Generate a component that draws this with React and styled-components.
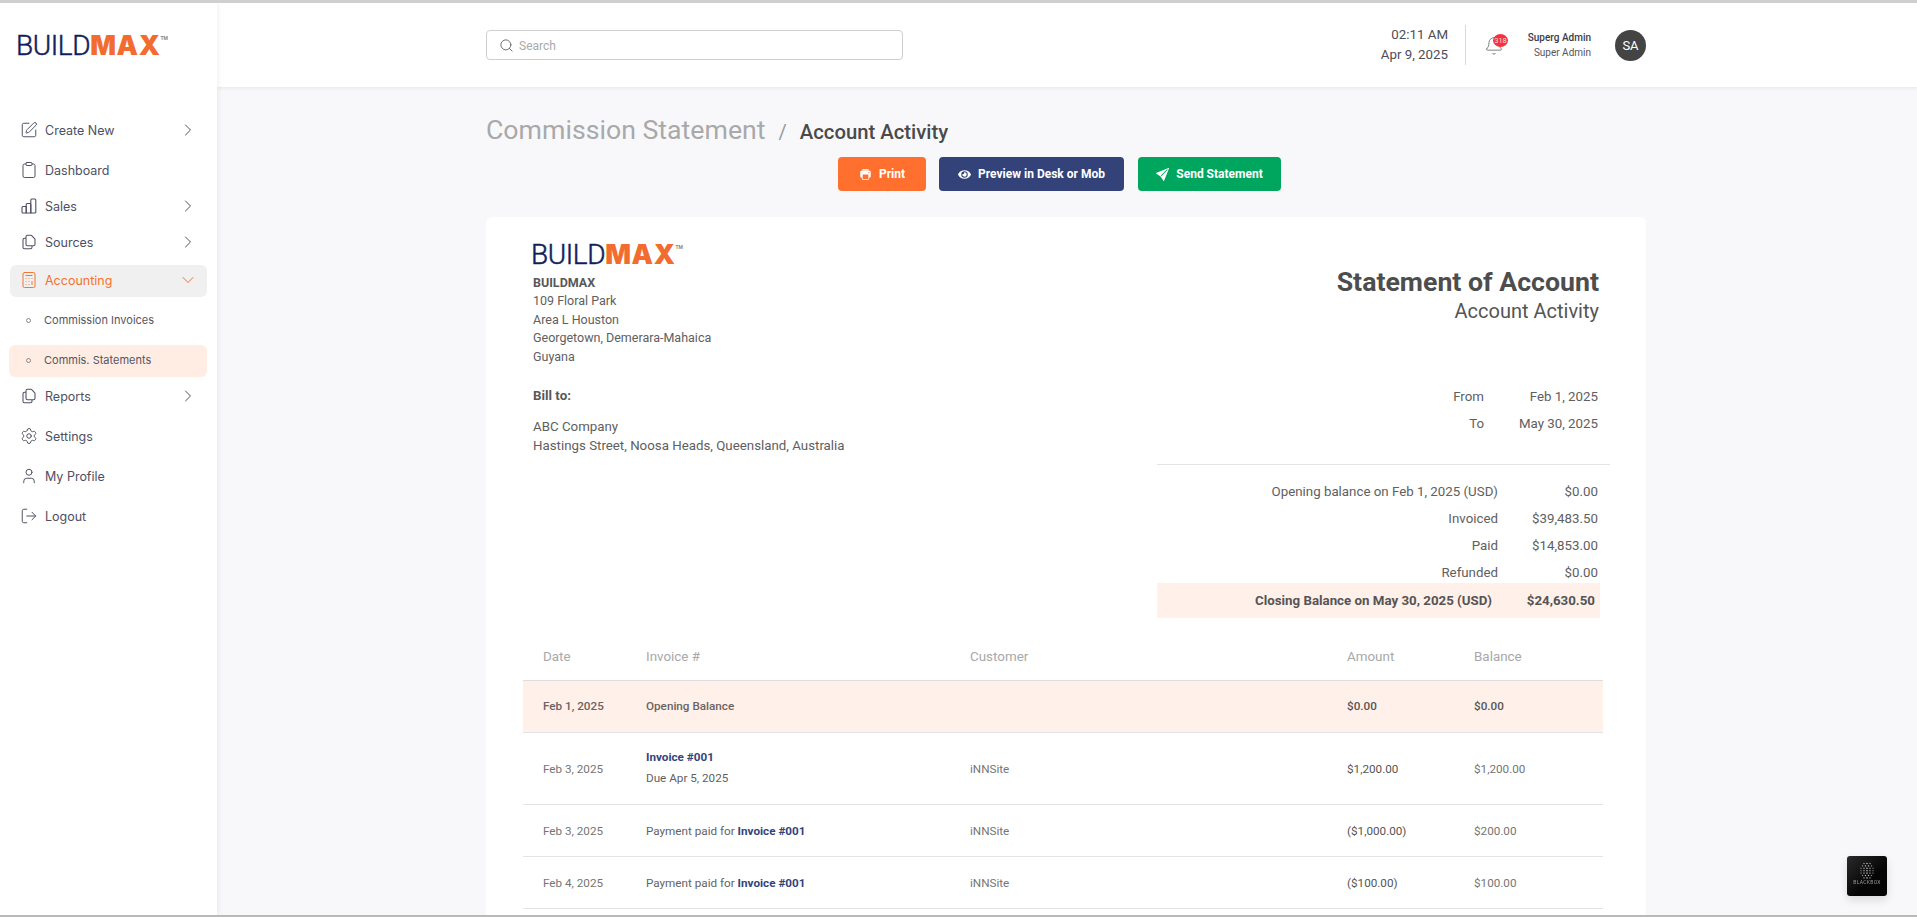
import React from "react";
import styled, { createGlobalStyle } from "styled-components";
import {
  SquarePen,
  Clipboard,
  Calculator,
  Settings,
  User,
  LogOut,
  ChevronRight,
  ChevronDown,
  Search,
  Bell,
} from "lucide-react";
import { BsSendFill } from "react-icons/bs";
import { FaEye } from "react-icons/fa";
import { IoPrint } from "react-icons/io5";
import { HiOutlineDocumentDuplicate } from "react-icons/hi";

const GlobalStyle = createGlobalStyle`
  html, body { margin: 0; padding: 0; height: 100%; overflow: hidden; }
  body { font-family: Roboto, "Liberation Sans", sans-serif; background: #f8f8fb; color: #555; }
  * { box-sizing: border-box; }
`;

const Shell = styled.div`
  display: flex;
  height: 917px;
  overflow: hidden;
  border-top: 3px solid #cfcfcf;
  border-bottom: 2px solid #b9b9b9;
  background: #f8f8fb;
`;

const Sidebar = styled.aside`
  width: 217px;
  flex-shrink: 0;
  background: #fff;
  box-shadow: 1px 0 5px rgba(0, 0, 0, 0.07);
  position: relative;
  z-index: 2;
`;

const SideLogo = styled.div`
  height: 108px;
  padding: 30px 0 0 18px;
`;

const LogoWrap = styled.div`
  display: flex;
  align-items: flex-start;
  height: 26px;
  margin-left: -2px;
  line-height: 26px;
  white-space: nowrap;
`;

const LogoBuild = styled.span`
  font-family: Roboto, sans-serif;
  font-weight: 300;
  font-size: 28px;
  letter-spacing: -0.4px;
  color: #101f5c;
  -webkit-text-stroke: 0.5px #101f5c;
`;

const LogoMax = styled.span`
  font-family: Inter, sans-serif;
  font-weight: 900;
  font-size: 27px;
  letter-spacing: 0.6px;
  color: #f26c30;
`;

const LogoTm = styled.span`
  font-size: 5px;
  line-height: 10px;
  color: #888;
  font-weight: 700;
`;

const Logo = () => (
  <LogoWrap>
    <LogoBuild>BUILD</LogoBuild>
    <LogoMax>MAX</LogoMax>
    <LogoTm>TM</LogoTm>
  </LogoWrap>
);

const NavItem = styled.div`
  display: flex;
  align-items: center;
  height: ${(p) => p.$h || 40}px;
  margin: ${(p) => (p.$active ? "2px" : "0")} 10px 0;
  padding: 0 9px 2px 12px;
  border-radius: 6px;
  font-family: Inter, sans-serif;
  font-size: 12.5px;
  color: ${(p) => (p.$active ? "#f4722f" : "#4f4f62")};
  background: ${(p) => (p.$active ? "#f0f0f0" : "transparent")};
  svg.lead {
    width: 18px;
    height: 18px;
    margin-right: 7px;
    margin-left: -2px;
    flex-shrink: 0;
  }
`;

const NavLabel = styled.span`
  flex: 1;
`;

const SubItem = styled.div`
  display: flex;
  align-items: center;
  height: ${(p) => p.$h || 32}px;
  margin: 0 10px 0 9px;
  padding: 0 0 2px 17px;
  border-radius: 6px;
  font-family: Inter, sans-serif;
  font-size: 11px;
  color: #55555f;
  background: ${(p) => (p.$active ? "#ffece3" : "transparent")};
`;

const SubDot = styled.span`
  width: 5px;
  height: 5px;
  border-radius: 50%;
  border: 1px solid #8a8a8a;
  margin-right: 13px;
  flex-shrink: 0;
`;

const Main = styled.main`
  flex: 1;
  min-width: 0;
`;

const Topbar = styled.header`
  height: 84px;
  background: #fff;
  box-shadow: 0 1px 4px rgba(0, 0, 0, 0.08);
  display: flex;
  align-items: center;
  padding-left: 269px;
`;

const SearchBox = styled.div`
  width: 417px;
  height: 30px;
  border: 1px solid #cfcfcf;
  border-radius: 4px;
  display: flex;
  align-items: center;
  padding: 1px 0 0 12px;
  font-size: 12px;
  color: #aaa;
  gap: 5px;
`;

const TimeBlock = styled.div`
  margin-left: 415px;
  width: 130px;
  text-align: right;
  font-size: 13.3px;
  line-height: 20px;
  color: #4d4d57;
`;

const Divider = styled.div`
  width: 1px;
  height: 40px;
  background: #d8d8d8;
  margin: 0 18px 0 17px;
`;

const BellWrap = styled.div`
  position: relative;
  width: 20px;
  height: 22px;
  margin-top: 4px;
  color: #666;
`;

const Badge = styled.span`
  position: absolute;
  top: -2px;
  left: 9px;
  width: 15px;
  height: 13px;
  border-radius: 50%;
  background: #f1343f;
  color: #ffd9dc;
  font-size: 7.5px;
  line-height: 13px;
  text-align: center;
`;

const UserInfo = styled.div`
  margin-left: 1px;
  width: 86px;
  text-align: right;
  font-size: 10px;
  line-height: 15px;
  color: #55555f;
`;

const UserName = styled.div`
  color: #3c3c46;
  font-weight: 500;
`;

const Avatar = styled.div`
  width: 31px;
  height: 31px;
  border-radius: 50%;
  margin-left: 24px;
  background: #444;
  color: #fff;
  font-size: 13px;
  display: flex;
  align-items: center;
  justify-content: center;
`;

const Content = styled.div`
  width: 1160px;
  margin-left: 269px;
`;

const Crumbs = styled.div`
  height: 70px;
  padding-top: 28px;
  display: flex;
  align-items: baseline;
  line-height: 30px;
`;

const CrumbMain = styled.span`
  font-size: 26.7px;
  color: #a9a9a9;
`;

const CrumbSep = styled.span`
  font-size: 20px;
  color: #999;
  margin: 0 13px;
`;

const CrumbSub = styled.span`
  font-size: 20.3px;
  font-weight: 500;
  color: #4a4a4a;
`;

const Actions = styled.div`
  display: flex;
  margin-left: 352px;
  height: 34px;
`;

const ActionBtn = styled.button`
  width: ${(p) => p.$w}px;
  margin-right: ${(p) => p.$mr || 0}px;
  height: 34px;
  border: none;
  border-radius: 4px;
  background: ${(p) => p.$bg};
  color: #fff;
  font-family: Roboto, sans-serif;
  font-size: 12px;
  font-weight: 700;
  display: flex;
  align-items: center;
  justify-content: center;
  gap: 7px;
  padding: 0;
  svg {
    font-size: 13px;
  }
`;

const Card = styled.section`
  margin-top: 26px;
  background: #fff;
  border-radius: 6px;
  padding: 24px 47px 0;
  height: 760px;
`;

const HeadRow = styled.div`
  display: flex;
  justify-content: space-between;
  height: 392px;
`;

const FromCol = styled.div`
  line-height: 18.4px;
  color: #606060;
  padding-top: 1px;
`;

const CompanyBlock = styled.div`
  font-size: 12.5px;
  margin-top: 6px;
`;

const Strong = styled.div`
  font-weight: 700;
  color: #585858;
`;

const BillBlock = styled.div`
  margin-top: 21px;
  font-size: 13.3px;
`;

const BillGap = styled.div`
  height: 13px;
`;

const RightCol = styled.div`
  width: 453px;
  margin-right: -11px;
  text-align: right;
  color: #606060;
`;

const StatementTitle = styled.h1`
  margin: 25px 11px 0 0;
  font-size: 26.7px;
  line-height: 33px;
  font-weight: 700;
  color: #4d4d4d;
`;

const StatementSub = styled.div`
  margin-right: 11px;
  font-size: 20px;
  line-height: 24px;
  color: #555;
`;

const Range = styled.div`
  margin-top: 61px;
  border-bottom: 1px solid #e4e4e4;
  padding-bottom: 27px;
`;

const RangeRow = styled.div`
  display: grid;
  grid-template-columns: 327px 114px;
  font-size: 13.3px;
  height: 26.6px;
  line-height: 26.6px;
`;

const Totals = styled.div`
  padding-top: 13px;
`;

const TotalRow = styled.div`
  display: grid;
  grid-template-columns: 341px 100px;
  font-size: 13.3px;
  height: 27px;
  line-height: 27px;
`;

const ClosingRow = styled.div`
  display: grid;
  grid-template-columns: 335px 103px;
  width: 443px;
  height: 35px;
  margin-top: -3px;
  line-height: 35px;
  background: #fff0e9;
  font-size: 13.3px;
  font-weight: 700;
  color: #555;
`;

const Table = styled.div`
  width: 1080px;
  margin-left: -10px;
`;

const Row = styled.div`
  display: grid;
  grid-template-columns: 103px 324px 377px 127px 1fr;
  align-items: center;
  height: ${(p) => p.$h}px;
  padding-left: 20px;
  border-bottom: 1px solid #e4e4e4;
  font-size: 11.7px;
  color: #757575;
`;

const HeaderRow = styled(Row)`
  font-size: 13.4px;
  color: #a8a8a8;
  border-bottom-color: #dedede;
`;

const BandRow = styled(Row)`
  background: #fff0e9;
  font-weight: 500;
  color: #6b6363;
  padding-bottom: 2px;
`;

const DarkCell = styled.span`
  color: #555;
`;

const InvoiceLink = styled.span`
  color: #33437a;
  font-weight: 700;
`;

const InvoiceStack = styled.div`
  line-height: 21px;
  margin-top: -1px;
`;

const DueLine = styled.div`
  color: #5f5f5f;
`;

const PaymentCell = styled.span`
  color: #636363;
`;

const Blackbox = styled.div`
  position: fixed;
  left: 1847px;
  top: 856px;
  width: 40px;
  height: 40px;
  border-radius: 3px;
  background: linear-gradient(135deg, #2a2a2a, #050505 60%);
  box-shadow: 0 4px 10px rgba(0, 0, 0, 0.12);
  display: flex;
  flex-direction: column;
  align-items: center;
  padding-top: 6px;
  color: #9a9a9a;
  font-size: 5px;
  letter-spacing: 0.3px;
  line-height: 7px;
  z-index: 5;
`;

const SourceIcon = styled(HiOutlineDocumentDuplicate).attrs({ className: "lead" })`
  path {
    stroke-width: 1.4;
  }
`;

const SalesIcon = () => (
  <svg className="lead" viewBox="0 0 18 18" fill="none" stroke="currentColor" strokeWidth="1.1" strokeLinejoin="round">
    <path d="M2 10.5a1 1 0 0 1 1-1h3.2V16H3a1 1 0 0 1-1-1z" />
    <path d="M6.2 7.5a1 1 0 0 1 1-1h2.6a1 1 0 0 1 1 1V16H6.2z" />
    <path d="M10.8 3a1 1 0 0 1 1-1h3a1 1 0 0 1 1 1v12a1 1 0 0 1-1 1h-4z" />
  </svg>
);

const nav = [
  { label: "Create New", icon: <SquarePen className="lead" strokeWidth={1.3} />, more: true },
  { label: "Dashboard", icon: <Clipboard className="lead" strokeWidth={1.3} /> },
  { label: "Sales", icon: <SalesIcon />, more: true, h: 32 },
  { label: "Sources", icon: <SourceIcon />, more: true },
];

const navAfter = [
  { label: "Reports", icon: <SourceIcon />, more: true },
  { label: "Settings", icon: <Settings className="lead" strokeWidth={1.3} /> },
  { label: "My Profile", icon: <User className="lead" strokeWidth={1.3} /> },
  { label: "Logout", icon: <LogOut className="lead" strokeWidth={1.3} /> },
];

const NavEntry = ({ item }) => (
  <NavItem $h={item.h}>
    {item.icon}
    <NavLabel>{item.label}</NavLabel>
    {item.more && <ChevronRight size={20} strokeWidth={1.2} />}
  </NavItem>
);

const totals = [
  ["Opening balance on Feb 1, 2025 (USD)", "$0.00"],
  ["Invoiced", "$39,483.50"],
  ["Paid", "$14,853.00"],
  ["Refunded", "$0.00"],
];

const dots = [];
[3, 4, 5, 5, 5, 4, 3].forEach((count, r) => {
  for (let c = 0; c < count; c++) {
    dots.push({ x: 9 + (c - (count - 1) / 2) * 3, y: 1.5 + r * 2.4, o: 1 - Math.abs(c - (count - 1) / 2) * 0.25 });
  }
});

export default function App() {
  return (
    <>
      <GlobalStyle />
      <Shell>
        <Sidebar>
          <SideLogo>
            <Logo />
          </SideLogo>
          {nav.map((item) => (
            <NavEntry key={item.label} item={item} />
          ))}
          <NavItem $h={32} $active>
            <Calculator className="lead" strokeWidth={1.3} />
            <NavLabel>Accounting</NavLabel>
            <ChevronDown size={20} strokeWidth={1.2} />
          </NavItem>
          <SubItem $h={48}>
            <SubDot />
            Commission Invoices
          </SubItem>
          <SubItem $active>
            <SubDot />
            Commis. Statements
          </SubItem>
          {navAfter.map((item) => (
            <NavEntry key={item.label} item={item} />
          ))}
        </Sidebar>
        <Main>
          <Topbar>
            <SearchBox>
              <Search size={15} strokeWidth={1.5} color="#666" />
              Search
            </SearchBox>
            <TimeBlock>
              02:11 AM
              <br />
              Apr 9, 2025
            </TimeBlock>
            <Divider />
            <BellWrap>
              <Bell size={20} strokeWidth={1} />
              <Badge>318</Badge>
            </BellWrap>
            <UserInfo>
              <UserName>Superg Admin</UserName>
              Super Admin
            </UserInfo>
            <Avatar>SA</Avatar>
          </Topbar>
          <Content>
            <Crumbs>
              <CrumbMain>Commission Statement</CrumbMain>
              <CrumbSep>/</CrumbSep>
              <CrumbSub>Account Activity</CrumbSub>
            </Crumbs>
            <Actions>
              <ActionBtn $w={88} $mr={13} $bg="#ff6f2e">
                <IoPrint />
                Print
              </ActionBtn>
              <ActionBtn $w={185} $mr={14} $bg="#33437a">
                <FaEye />
                Preview in Desk or Mob
              </ActionBtn>
              <ActionBtn $w={143} $bg="#00a65d">
                <BsSendFill />
                Send Statement
              </ActionBtn>
            </Actions>
            <Card>
              <HeadRow>
                <FromCol>
                  <Logo />
                  <CompanyBlock>
                    <Strong>BUILDMAX</Strong>
                    109 Floral Park
                    <br />
                    Area L Houston
                    <br />
                    Georgetown, Demerara-Mahaica
                    <br />
                    Guyana
                  </CompanyBlock>
                  <BillBlock>
                    <Strong>Bill to:</Strong>
                    <BillGap />
                    ABC Company
                    <br />
                    Hastings Street, Noosa Heads, Queensland, Australia
                  </BillBlock>
                </FromCol>
                <RightCol>
                  <StatementTitle>Statement of Account</StatementTitle>
                  <StatementSub>Account Activity</StatementSub>
                  <Range>
                    <RangeRow>
                      <span>From</span>
                      <span>Feb 1, 2025</span>
                    </RangeRow>
                    <RangeRow>
                      <span>To</span>
                      <span>May 30, 2025</span>
                    </RangeRow>
                  </Range>
                  <Totals>
                    {totals.map(([label, value]) => (
                      <TotalRow key={label}>
                        <span>{label}</span>
                        <span>{value}</span>
                      </TotalRow>
                    ))}
                    <ClosingRow>
                      <span>Closing Balance on May 30, 2025 (USD)</span>
                      <span>$24,630.50</span>
                    </ClosingRow>
                  </Totals>
                </RightCol>
              </HeadRow>
              <Table>
                <HeaderRow $h={48}>
                  <span>Date</span>
                  <span>Invoice #</span>
                  <span>Customer</span>
                  <span>Amount</span>
                  <span>Balance</span>
                </HeaderRow>
                <BandRow $h={52}>
                  <span>Feb 1, 2025</span>
                  <span>Opening Balance</span>
                  <span />
                  <DarkCell>$0.00</DarkCell>
                  <DarkCell>$0.00</DarkCell>
                </BandRow>
                <Row $h={72}>
                  <span>Feb 3, 2025</span>
                  <InvoiceStack>
                    <InvoiceLink>Invoice #001</InvoiceLink>
                    <DueLine>Due Apr 5, 2025</DueLine>
                  </InvoiceStack>
                  <span>iNNSite</span>
                  <DarkCell>$1,200.00</DarkCell>
                  <span>$1,200.00</span>
                </Row>
                <Row $h={52}>
                  <span>Feb 3, 2025</span>
                  <PaymentCell>
                    Payment paid for <InvoiceLink>Invoice #001</InvoiceLink>
                  </PaymentCell>
                  <span>iNNSite</span>
                  <DarkCell>($1,000.00)</DarkCell>
                  <span>$200.00</span>
                </Row>
                <Row $h={52}>
                  <span>Feb 4, 2025</span>
                  <PaymentCell>
                    Payment paid for <InvoiceLink>Invoice #001</InvoiceLink>
                  </PaymentCell>
                  <span>iNNSite</span>
                  <DarkCell>($100.00)</DarkCell>
                  <span>$100.00</span>
                </Row>
              </Table>
            </Card>
          </Content>
        </Main>
      </Shell>
      <Blackbox>
        <svg width="18" height="17" viewBox="0 0 18 17">
          {dots.map((d, i) => (
            <rect key={i} x={d.x - 0.6} y={d.y - 0.6} width="1.2" height="1.2" fill="#ddd" opacity={d.o} />
          ))}
        </svg>
        BLACKBOX
      </Blackbox>
    </>
  );
}
